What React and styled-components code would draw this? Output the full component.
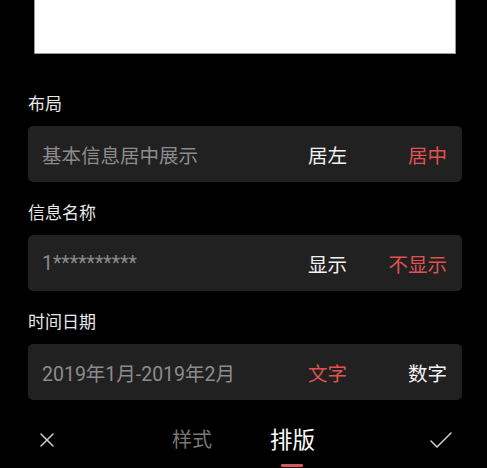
import React from "react";
import styled, { createGlobalStyle } from "styled-components";

const Global = createGlobalStyle`
  html, body { margin: 0; padding: 0; background: #000; }
  body { font-family: Roboto, "Noto Sans CJK SC", sans-serif; }
  * { box-sizing: border-box; }
`;

const Page = styled.div`
  width: 487px;
  height: 468px;
  background: #000;
  display: flex;
  flex-direction: column;
  overflow: hidden;
`;

const Preview = styled.div`
  margin-left: 34px;
  width: 422px;
  height: 54px;
  background: #fff;
  border: 1px solid #9a9a9a;
  border-top: none;
  flex: none;
`;

const Settings = styled.div`
  padding: 38px 25px 0 28px;
  display: flex;
  flex-direction: column;
`;

const Section = styled.section`
  display: flex;
  flex-direction: column;
  & + & { margin-top: 19px; }
`;

const Label = styled.div`
  font-size: 17px;
  line-height: 24px;
  color: #e8e8e8;
  margin-bottom: 10px;
`;

const Card = styled.div`
  height: 56px;
  background: #212121;
  border-radius: 5px;
  display: flex;
  align-items: center;
  padding: 0 15px 0 14px;
`;

const Value = styled.div`
  flex: 1;
  font-size: 19.5px;
  color: #8c8c8c;
  white-space: nowrap;
`;

const Option = styled.div`
  width: 100px;
  text-align: right;
  font-size: 19.5px;
  color: ${(p) => (p.$active ? "#e0524f" : "#f2f2f2")};
  white-space: nowrap;
`;

const Bar = styled.div`
  margin-top: 25px;
  display: grid;
  grid-template-columns: 1fr auto 1fr;
  align-items: start;
  padding: 0 35px;
`;

const IconBtn = styled.div`
  height: 30px;
  display: flex;
  align-items: center;
  justify-self: ${(p) => (p.$end ? "end" : "start")};
  padding-left: ${(p) => (p.$end ? "0" : "5px")};
  color: #d0d0d0;
`;

const Tabs = styled.div`
  display: flex;
  gap: 58px;
  align-items: flex-start;
`;

const Tab = styled.div`
  display: flex;
  flex-direction: column;
  align-items: center;
  font-size: ${(p) => (p.$active ? "22.5px" : "20px")};
  line-height: 30px;
  color: ${(p) => (p.$active ? "#ffffff" : "#777777")};
`;

const Indicator = styled.div`
  margin-top: 9px;
  width: 22px;
  height: 3px;
  border-radius: 1px;
  background: #d9575a;
`;

const rows = [
  { label: "布局", value: "基本信息居中展示", options: ["居左", "居中"], active: 1 },
  { label: "信息名称", value: "1**********", options: ["显示", "不显示"], active: 1 },
  { label: "时间日期", value: "2019年1月-2019年2月", options: ["文字", "数字"], active: 0 },
];

export default function App() {
  return (
    <Page>
      <Global />
      <Preview />
      <Settings>
        {rows.map((r) => (
          <Section key={r.label}>
            <Label>{r.label}</Label>
            <Card>
              <Value>{r.value}</Value>
              {r.options.map((o, i) => (
                <Option key={o} $active={i === r.active}>{o}</Option>
              ))}
            </Card>
          </Section>
        ))}
      </Settings>
      <Bar>
        <IconBtn>
          <svg width="14" height="14" viewBox="0 0 14 14" fill="none" stroke="currentColor" strokeWidth="1.5" strokeLinecap="round">
            <path d="M1 1 L13 13 M13 1 L1 13" />
          </svg>
        </IconBtn>
        <Tabs>
          <Tab>样式</Tab>
          <Tab $active>
            排版
            <Indicator />
          </Tab>
        </Tabs>
        <IconBtn $end>
          <svg width="22" height="16" viewBox="0 0 22 16" fill="none" stroke="currentColor" strokeWidth="1.5" strokeLinecap="round" strokeLinejoin="round">
            <path d="M1 9 L7 15 L21 1" />
          </svg>
        </IconBtn>
      </Bar>
    </Page>
  );
}
